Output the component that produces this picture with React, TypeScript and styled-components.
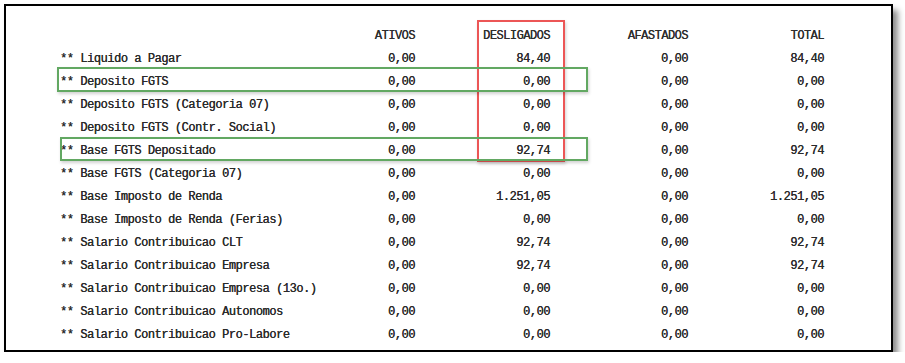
import styled, { createGlobalStyle } from "styled-components"

const Global = createGlobalStyle`
   html, body {
      margin: 0;
      background: #fff;
   }
`

interface Row {
   label: string
   values: string[]
}

const rows: Row[] = [
   { label: "** Liquido a Pagar", values: ["0,00", "84,40", "0,00", "84,40"] },
   { label: "** Deposito FGTS", values: ["0,00", "0,00", "0,00", "0,00"] },
   { label: "** Deposito FGTS (Categoria 07)", values: ["0,00", "0,00", "0,00", "0,00"] },
   { label: "** Deposito FGTS (Contr. Social)", values: ["0,00", "0,00", "0,00", "0,00"] },
   { label: "** Base FGTS Depositado", values: ["0,00", "92,74", "0,00", "92,74"] },
   { label: "** Base FGTS (Categoria 07)", values: ["0,00", "0,00", "0,00", "0,00"] },
   { label: "** Base Imposto de Renda", values: ["0,00", "1.251,05", "0,00", "1.251,05"] },
   { label: "** Base Imposto de Renda (Ferias)", values: ["0,00", "0,00", "0,00", "0,00"] },
   { label: "** Salario Contribuicao CLT", values: ["0,00", "92,74", "0,00", "92,74"] },
   { label: "** Salario Contribuicao Empresa", values: ["0,00", "92,74", "0,00", "92,74"] },
   { label: "** Salario Contribuicao Empresa (13o.)", values: ["0,00", "0,00", "0,00", "0,00"] },
   { label: "** Salario Contribuicao Autonomos", values: ["0,00", "0,00", "0,00", "0,00"] },
   { label: "** Salario Contribuicao Pro-Labore", values: ["0,00", "0,00", "0,00", "0,00"] },
]

const Frame = styled.div`
   position: relative;
   box-sizing: border-box;
   margin: 4px 0 0 4px;
   width: 889px;
   height: 348px;
   border: 2px solid #000;
   background: #fff;
   box-shadow: 5px 6px 6px rgba(0, 0, 0, 0.45);
   padding: 18px 0 0 54px;
`

const Table = styled.div`
   display: grid;
   grid-template-columns: 290px 65px 135px 138px 136px;
   grid-auto-rows: 23px;
   font-family: "Liberation Mono", "Courier New", monospace;
   font-size: 12px;
   letter-spacing: -0.45px;
   color: #2a2a2a;
   text-shadow: 0.2px 0 0 #2a2a2a;
`

const Cell = styled.div<{ $right?: boolean }>`
   display: flex;
   align-items: center;
   justify-content: ${p => (p.$right ? "flex-end" : "flex-start")};
   white-space: pre;
`

const Head = styled(Cell)`
   letter-spacing: -0.5px;
   color: #2e2e2e;
`

const Mark = styled.div<{ $color: string; $x: number; $y: number; $w: number; $h: number }>`
   position: absolute;
   left: ${p => p.$x}px;
   top: ${p => p.$y}px;
   width: ${p => p.$w}px;
   height: ${p => p.$h}px;
   box-sizing: border-box;
   border: 2px solid ${p => p.$color};
   box-shadow: 1px 2px 3px rgba(0, 0, 0, 0.18);
   pointer-events: none;
`

export default function App() {
   return (
      <>
         <Global />
         <Frame>
            <Table>
               <Head />
               <Head $right>ATIVOS</Head>
               <Head $right>DESLIGADOS</Head>
               <Head $right>AFASTADOS</Head>
               <Head $right>TOTAL</Head>
               {rows.map(row => (
                  <>
                     <Cell key={row.label}>{row.label}</Cell>
                     {row.values.map((v, i) => (
                        <Cell key={row.label + i} $right>{v}</Cell>
                     ))}
                  </>
               ))}
            </Table>
            <Mark $color="#ec5656" $x={471} $y={14} $w={88} $h={142} />
            <Mark $color="#62a862" $x={51} $y={61} $w={531} $h={25} />
            <Mark $color="#62a862" $x={54} $y={131} $w={528} $h={24} />
         </Frame>
      </>
   )
}
